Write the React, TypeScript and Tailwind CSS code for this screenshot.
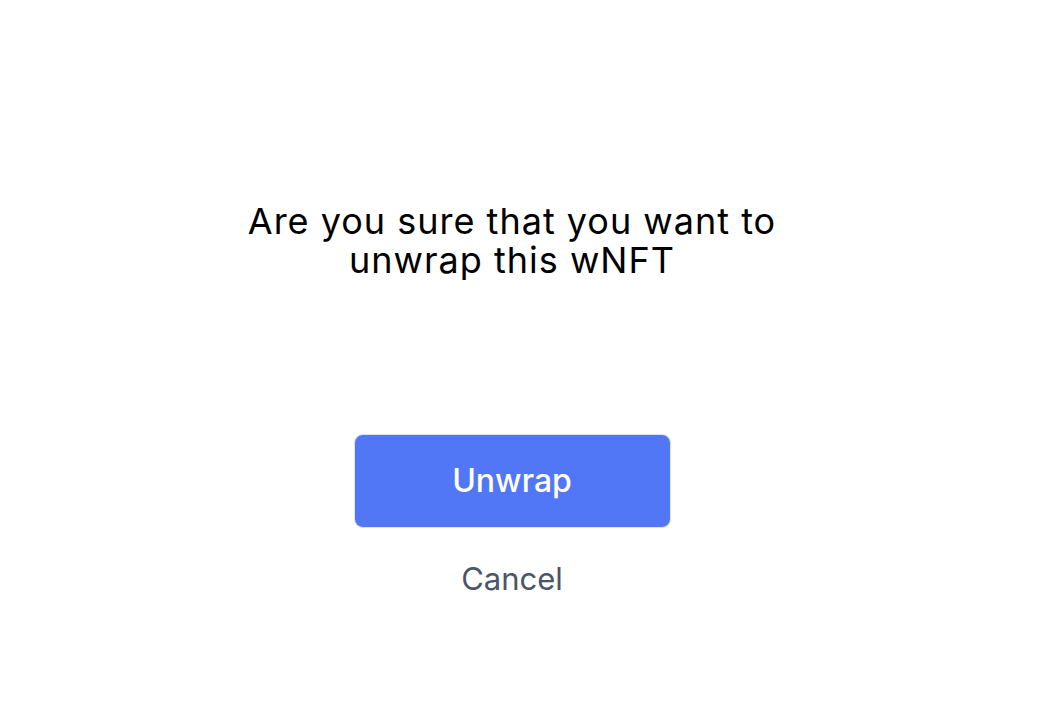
export default function App() {
  return (
    <div
      className="min-h-[710px] w-full bg-white pr-[20px]"
      style={{ fontFamily: "Inter, 'Noto Sans', sans-serif" }}
    >
      <div className="flex flex-col items-center pt-[202px]">
        <h2 className="text-center text-[36px] leading-[39px] font-normal text-black tracking-[1px]">
          Are you sure that you want to
          <br />
          unwrap this wNFT
        </h2>
        <button className="mt-[154px] h-[94px] w-[317px] rounded-[9px] border border-[#dfe3ee] bg-[#5277f6] text-[32px] font-medium text-white">
          Unwrap
        </button>
        <button className="mt-[28px] text-[31px] text-[#4a5567]">Cancel</button>
      </div>
    </div>
  );
}
